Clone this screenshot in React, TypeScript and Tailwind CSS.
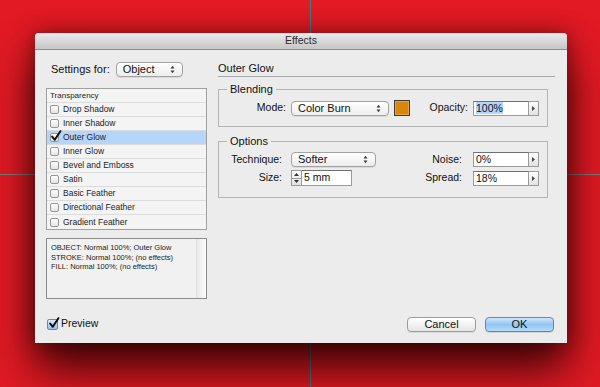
import React from 'react'

const effects = [
  { name: 'Drop Shadow', checked: false },
  { name: 'Inner Shadow', checked: false },
  { name: 'Outer Glow', checked: true },
  { name: 'Inner Glow', checked: false },
  { name: 'Bevel and Emboss', checked: false },
  { name: 'Satin', checked: false },
  { name: 'Basic Feather', checked: false },
  { name: 'Directional Feather', checked: false },
  { name: 'Gradient Feather', checked: false },
]

function CheckMark({ className }: { className: string }) {
  return (
    <svg viewBox="0 0 12 12" className={className}>
      <path
        d="M2.2 6.6 L4.8 9.8 L10.4 1.2"
        fill="none"
        stroke="#111"
        strokeWidth="2"
        strokeLinecap="round"
        strokeLinejoin="round"
      />
    </svg>
  )
}

function Checkbox({ checked }: { checked?: boolean }) {
  return (
    <span className="relative block h-[9px] w-[9px] shrink-0 rounded-[2px] border border-[#979797] bg-gradient-to-b from-white to-[#e4e4e4]">
      {checked && <CheckMark className="absolute -left-[1px] -top-[4px] h-[12px] w-[12px]" />}
    </span>
  )
}

function UpDown() {
  return (
    <svg width="5" height="9" viewBox="0 0 5 9">
      <path d="M0.5 3.5 L2.5 0.8 L4.5 3.5Z M0.5 5.5 L2.5 8.2 L4.5 5.5Z" fill="#3a3a3a" />
    </svg>
  )
}

function Popup({ value, className }: { value: string; className: string }) {
  return (
    <div
      className={`flex h-[15px] items-center justify-between rounded-[4px] border border-[#a2a2a2] bg-gradient-to-b from-white to-[#ededed] pl-[6px] pr-[7px] text-[11px] leading-none text-[#111] shadow-[0_1px_0_rgba(0,0,0,0.08)] ${className}`}
    >
      <span>{value}</span>
      <UpDown />
    </div>
  )
}

function Field({ value, selected }: { value: string; selected?: boolean }) {
  return (
    <div className="flex h-[15px]">
      <div className="flex w-[56px] items-center border border-[#9a9a9a] border-t-[#707070] bg-white pl-[2px] text-[10.5px] leading-none text-[#111]">
        <span className={selected ? 'bg-[#b4d5fe] py-[1px]' : ''}>{value}</span>
      </div>
      <div className="flex w-[10px] items-center justify-center border border-l-0 border-[#9a9a9a] bg-gradient-to-b from-white to-[#e2e2e2]">
        <svg width="3" height="5" viewBox="0 0 3 5">
          <path d="M0 0 L3 2.5 L0 5Z" fill="#444" />
        </svg>
      </div>
    </div>
  )
}

function Spinner() {
  return (
    <div className="flex h-[16px] w-[11px] flex-col border border-[#9a9a9a] bg-gradient-to-b from-white to-[#e2e2e2]">
      <div className="flex flex-1 items-center justify-center border-b border-[#9a9a9a]">
        <svg width="5" height="3" viewBox="0 0 5 3">
          <path d="M0 3 L2.5 0 L5 3Z" fill="#333" />
        </svg>
      </div>
      <div className="flex flex-1 items-center justify-center">
        <svg width="5" height="3" viewBox="0 0 5 3">
          <path d="M0 0 L2.5 3 L5 0Z" fill="#333" />
        </svg>
      </div>
    </div>
  )
}

export default function App() {
  return (
    <div className="relative h-[387px] w-[600px] overflow-hidden bg-[#e11a24] font-['Liberation_Sans',Arial,sans-serif] text-[#111]">
      {/* guides behind the dialog */}
      <div className="absolute left-[310px] top-0 h-full w-[1px] bg-[#3f7e8a]" />
      <div className="absolute left-0 top-[174px] h-[1px] w-full bg-[#7d7d7d]" />

      <div className="pl-[35px] pt-[33px]">
        <div className="relative z-10 flex h-[310px] w-[532px] flex-col rounded-t-[4px] bg-[#ececec] shadow-[0_26px_44px_rgba(30,0,0,0.85),0_0_20px_rgba(40,0,0,0.5)]">
          {/* Title bar */}
          <div className="flex h-[17px] items-center justify-center rounded-t-[4px] border-b border-[#8e8e8e] bg-gradient-to-b from-[#ebebeb] to-[#c6c6c6] text-[10.5px] text-[#2a2a2a]">
            Effects
          </div>

          <div className="flex flex-1 px-[11px]">
            {/* Left column */}
            <div className="flex w-[161px] flex-col">
              <div className="mt-[12px] flex h-[15px] items-center">
                <span className="pl-[5px] text-[11px]">Settings for:</span>
                <Popup value="Object" className="ml-[6px] w-[67px]" />
              </div>

              <div className="mt-[11px] border border-[#a0a0a0] bg-[#f4f4f4]">
                <div className="flex h-[14px] items-center border-b border-[#dcdcdc] pl-[3px] text-[8px] text-[#222]">
                  Transparency
                </div>
                {effects.map((e) => (
                  <div
                    key={e.name}
                    className={`flex h-[14px] items-center border-b border-[#dcdcdc] pl-[3px] text-[8.5px] text-[#222] last:border-b-0 ${
                      e.checked ? 'bg-[#b6d5fa]' : ''
                    }`}
                  >
                    <Checkbox checked={e.checked} />
                    <span className="ml-[4px]">{e.name}</span>
                  </div>
                ))}
              </div>

              <div className="mt-[8px] flex h-[61px] border border-[#8a8a8a] bg-[#f1f1f1]">
                <div className="flex-1 pl-[4px] pt-[4px] text-[7.5px] leading-[9.5px] text-[#222]">
                  <div>OBJECT: Normal 100%; Outer Glow</div>
                  <div>STROKE: Normal 100%; (no effects)</div>
                  <div>FILL: Normal 100%; (no effects)</div>
                </div>
                <div className="w-[10px] border-l border-[#e2e2e2] bg-gradient-to-r from-[#e9e9e9] to-[#fbfbfb]" />
              </div>

              <div className="mt-[19px] flex h-[12px] items-center pl-[1px]">
                <span className="relative block h-[11px] w-[11px] rounded-[2px] border border-[#6f86a6] bg-gradient-to-b from-[#dce9f8] to-[#9dbfe6]">
                  <CheckMark className="absolute left-0 -top-[3px] h-[12px] w-[12px]" />
                </span>
                <span className="ml-[3px] text-[10.5px]">Preview</span>
              </div>
            </div>

            {/* Right column */}
            <div className="ml-[11px] flex w-[337px] flex-col">
              <div className="mt-[12px] border-b border-[#a8a8a8] pb-[1px] text-[11px] leading-[13px]">
                Outer Glow
              </div>

              <fieldset className="mt-[6px] w-[330px] border border-[#b4b4b4] pb-[10px]">
                <legend className="ml-[8px] px-[3px] text-[11px] leading-[13px]">Blending</legend>
                <div className="mt-[4px] flex h-[16px] items-center justify-between pr-[8px]">
                  <div className="flex items-center">
                    <span className="w-[67px] text-right text-[10.5px]">Mode:</span>
                    <Popup value="Color Burn" className="ml-[5px] w-[98px]" />
                    <span className="ml-[5px] block h-[16px] w-[16px] border border-[#3c3c3c] bg-[#d7870b] shadow-[inset_0_0_0_1px_rgba(255,255,255,0.25)]" />
                  </div>
                  <div className="flex items-center">
                    <span className="text-[10.5px]">Opacity:</span>
                    <div className="ml-[5px]">
                      <Field value="100%" selected />
                    </div>
                  </div>
                </div>
              </fieldset>

              <fieldset className="mt-[8px] w-[330px] border border-[#b4b4b4] pb-[11px]">
                <legend className="ml-[8px] px-[3px] text-[11px] leading-[13px]">Options</legend>
                <div className="mt-[4px] flex h-[15px] items-center justify-between pr-[8px]">
                  <div className="flex items-center">
                    <span className="w-[63px] text-right text-[10.5px]">Technique:</span>
                    <Popup value="Softer" className="ml-[9px] w-[85px]" />
                  </div>
                  <div className="flex items-center">
                    <span className="text-[10.5px]">Noise:</span>
                    <div className="ml-[11px]">
                      <Field value="0%" />
                    </div>
                  </div>
                </div>
                <div className="mt-[3px] flex h-[16px] items-center justify-between pr-[8px]">
                  <div className="flex items-center">
                    <span className="w-[63px] text-right text-[10.5px]">Size:</span>
                    <div className="ml-[9px] flex">
                      <Spinner />
                      <div className="flex h-[16px] w-[50px] items-center border border-l-0 border-[#9a9a9a] border-t-[#707070] bg-white pl-[2px] text-[10.5px]">
                        5 mm
                      </div>
                    </div>
                  </div>
                  <div className="flex items-center">
                    <span className="text-[10.5px]">Spread:</span>
                    <div className="ml-[11px]">
                      <Field value="18%" />
                    </div>
                  </div>
                </div>
              </fieldset>

              <div className="mb-[11px] mt-auto flex justify-end gap-[9px] pr-[1px]">
                <button className="h-[15px] w-[69px] rounded-[4px] border border-[#9c9c9c] bg-gradient-to-b from-white to-[#e6e6e6] text-[11px] leading-none shadow-[0_1px_0_rgba(0,0,0,0.08)]">
                  Cancel
                </button>
                <button className="h-[15px] w-[69px] rounded-[4px] border border-[#5d87b8] bg-gradient-to-b from-[#cfe6fb] via-[#92c5f1] to-[#b5dbf9] text-[11px] leading-none shadow-[0_1px_0_rgba(0,0,0,0.1)]">
                  OK
                </button>
              </div>
            </div>
          </div>
        </div>
      </div>
    </div>
  )
}
